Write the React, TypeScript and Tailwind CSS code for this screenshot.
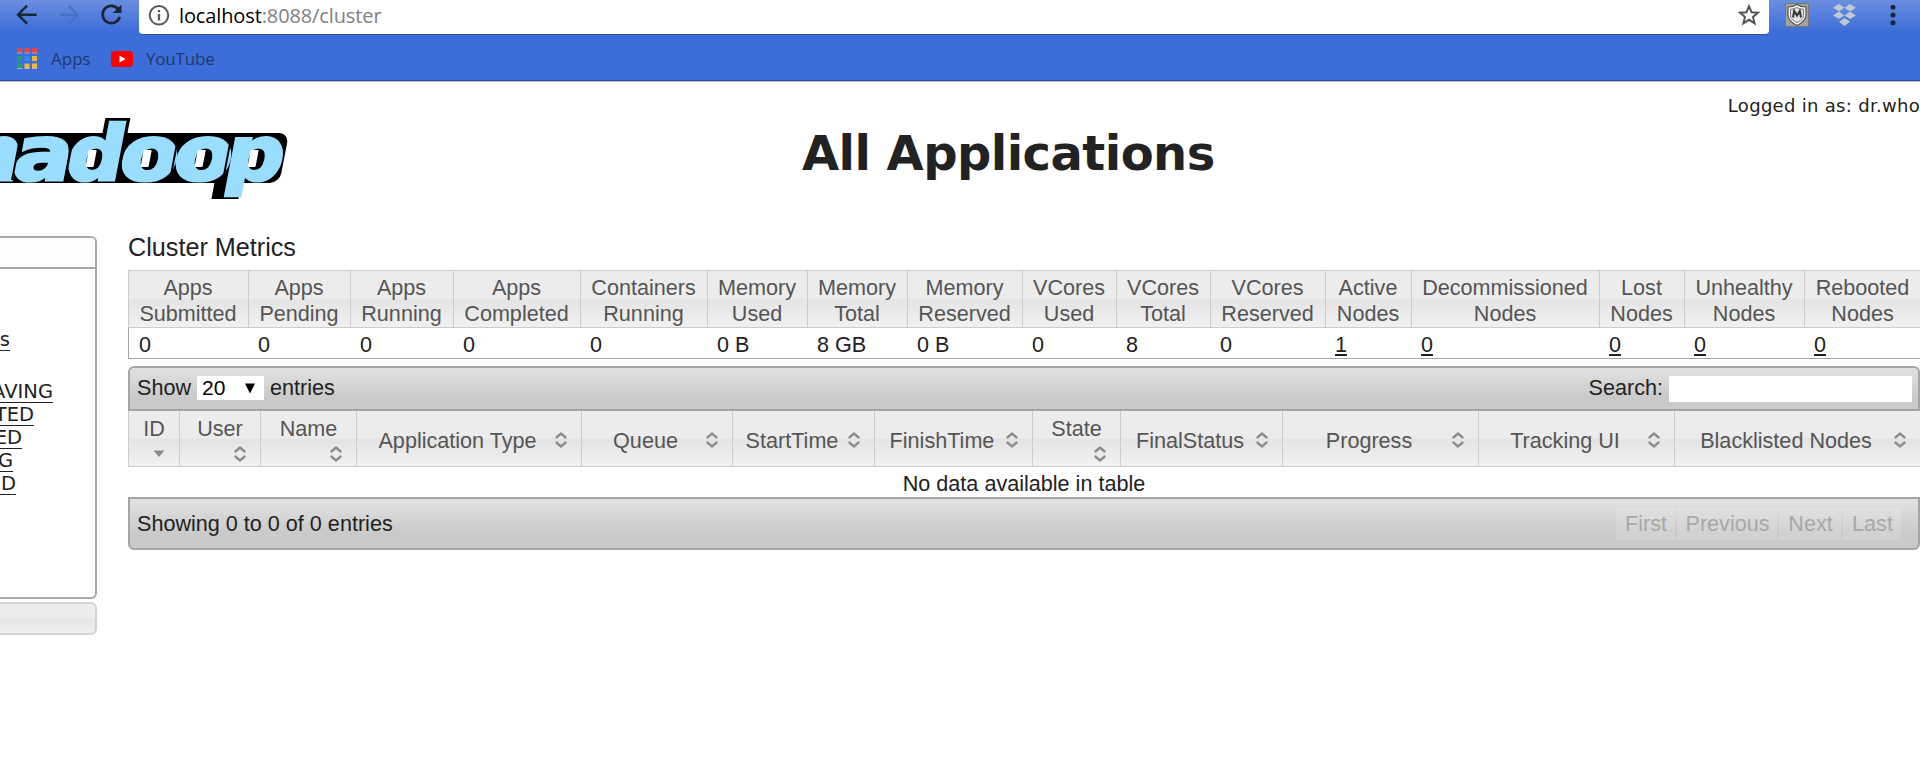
import React from "react";

type Metric = { label: [string, string]; value: string; width: string; link?: boolean };

const metrics: Metric[] = [
  { label: ["Apps", "Submitted"], value: "0", width: "w-[120px]" },
  { label: ["Apps", "Pending"], value: "0", width: "w-[102px]" },
  { label: ["Apps", "Running"], value: "0", width: "w-[103px]" },
  { label: ["Apps", "Completed"], value: "0", width: "w-[127px]" },
  { label: ["Containers", "Running"], value: "0", width: "w-[127px]" },
  { label: ["Memory", "Used"], value: "0 B", width: "w-[100px]" },
  { label: ["Memory", "Total"], value: "8 GB", width: "w-[100px]" },
  { label: ["Memory", "Reserved"], value: "0 B", width: "w-[115px]" },
  { label: ["VCores", "Used"], value: "0", width: "w-[94px]" },
  { label: ["VCores", "Total"], value: "8", width: "w-[94px]" },
  { label: ["VCores", "Reserved"], value: "0", width: "w-[115px]" },
  { label: ["Active", "Nodes"], value: "1", width: "w-[86px]", link: true },
  { label: ["Decommissioned", "Nodes"], value: "0", width: "w-[188px]", link: true },
  { label: ["Lost", "Nodes"], value: "0", width: "w-[85px]", link: true },
  { label: ["Unhealthy", "Nodes"], value: "0", width: "w-[120px]", link: true },
  { label: ["Rebooted", "Nodes"], value: "0", width: "w-[117px]", link: true },
];

type Column = { label: string; width: string; stacked?: boolean; sorted?: boolean };

const columns: Column[] = [
  { label: "ID", width: "w-[51px]", stacked: true, sorted: true },
  { label: "User", width: "w-[81px]", stacked: true },
  { label: "Name", width: "w-[96px]", stacked: true },
  { label: "Application Type", width: "w-[225px]" },
  { label: "Queue", width: "w-[151px]" },
  { label: "StartTime", width: "w-[142px]" },
  { label: "FinishTime", width: "w-[158px]" },
  { label: "State", width: "w-[88px]", stacked: true },
  { label: "FinalStatus", width: "w-[162px]" },
  { label: "Progress", width: "w-[196px]" },
  { label: "Tracking UI", width: "w-[196px]" },
  { label: "Blacklisted Nodes", width: "w-[246px]" },
];

const headerFill =
  "bg-[linear-gradient(to_bottom,#ededed_0%,#ececec_48%,#e4e4e4_52%,#f1f1f1_100%)]";
const barFill = "bg-[linear-gradient(to_bottom,#e2e2e2_0%,#cacaca_70%,#cacaca_100%)]";

function SortIcon({ sorted }: { sorted?: boolean }) {
  return sorted ? (
    <svg className="h-4 w-3 shrink-0" viewBox="0 0 12 16">
      <path d="M.5 4.5h11L6 11z" fill="#8a8a8a" />
    </svg>
  ) : (
    <svg className="h-4 w-3 shrink-0" viewBox="0 0 12 16" fill="none" stroke="#8c8c8c" strokeWidth="2.4">
      <path d="M.8 6 6 1.600l5.200 4.400M.8 10l5.200 4.400 5.200-4.400" />
    </svg>
  );
}

function BrowserBar() {
  return (
    <header className="h-[82px] shrink-0 border-b border-[#b9c4dc]">
      <div className="flex h-[81px] flex-col border-b border-[#2d4a8c] bg-[linear-gradient(to_bottom,#6a8fe0_0px,#3d6dd8_32px)]">
        <div className="flex h-[36px]">
          <div className="flex w-[139px] shrink-0">
            <svg className="h-[36px] w-[139px]" viewBox="0 0 139 36" fill="none" strokeWidth="2.4">
              <path d="M36.5 14.7H18.5M27 5.700l-9 9 9 9" stroke="#1b2636" />
              <path d="M60 14.700h17M69 6l8.500 8.700L69 23.500" stroke="#4a70c4" />
              <path d="M118.500 9.500a8.700 8.700 0 1 0 1.200 7.500" stroke="#1b2636" strokeWidth="2.7" />
              <path d="M121.500 4.500v8.500h-8.700z" fill="#1b2636" />
            </svg>
          </div>
          <div className="flex h-[35px] w-[1630px] shrink-0 rounded-b-[4px] border-b border-[#2f4f99] bg-white">
            <svg className="mt-[4px] ml-[9px] size-[22px] shrink-0" viewBox="0 0 22 22" fill="none" stroke="#5a5a5a">
              <circle cx="11" cy="11.300" r="9.300" strokeWidth="2" />
              <path d="M11 10v6.500M11 6v2.300" strokeWidth="2.300" />
            </svg>
            <div className="ml-[9px] h-[30px] tracking-[-0.12px] whitespace-nowrap font-['Open_Sans',sans-serif] text-[20px] leading-[31px] text-[#808080]">
              <span className="text-black">localhost</span>:8088/cluster
            </div>
            <svg className="mt-[4px] mr-[9px] ml-auto size-[22px]" viewBox="0 0 22 22">
              <path
                d="M11 2.200l2.500 6 6.500.5-5 4.200 1.600 6.400-5.600-3.500-5.600 3.500L7 12.900 2 8.700l6.500-.5z"
                fill="none"
                stroke="#555"
                strokeWidth="2"
              />
            </svg>
          </div>
          <svg className="ml-[15px] h-[28px] w-[26px] shrink-0" viewBox="0 0 26 28">
            <rect x="1.500" y="3.500" width="23" height="23" fill="#a2a2a2" stroke="#777" />
            <path d="M13 4.500C16 6.500 19 7 22 7v8c0 5-4 8-9 10.500C8 23 4 20 4 15V7c3 0 6-.5 9-2.500z" fill="#f4f4f4" stroke="#555" strokeWidth="1.200" />
            <path d="M13 7.500c2.500 1.300 4.500 1.700 6.500 1.800v6.200c0 3-3 5.500-6.500 7-3.500-1.500-6.500-4-6.500-7V9.300c2-.1 4-.5 6.500-1.800z" fill="#e2e2e2" stroke="#777" />
            <path d="M9 17.500 10.200 11l2.800 4.500 2.800-4.500 1.200 6.500" fill="none" stroke="#333" strokeWidth="2" />
          </svg>
          <svg className="ml-[22px] h-[28px] w-[25px] shrink-0" viewBox="0 0 25 28" fill="#c0c8d2">
            <path d="M7 4l5.500 3.800L7 11.500 1 7.800zM18 4l6 3.800-6 3.700-5.500-3.700zM7 11.500l5.500 3.900L7 19l-6-3.600zM18 11.500l6 3.900L18 19l-5.500-3.600zM12.500 18 18 21.700l-5.500 4.300L7 21.700z" />
          </svg>
          <svg className="ml-[30px] h-[28px] w-[12px] shrink-0" viewBox="0 0 12 28" fill="#1b2636">
            <circle cx="6" cy="7.300" r="2.500" />
            <circle cx="6" cy="15" r="2.500" />
            <circle cx="6" cy="22.700" r="2.500" />
          </svg>
        </div>
        <div className="flex h-[44px] font-['Open_Sans',sans-serif] text-[17px] leading-[45px] text-[#1f3a70]">
          <svg className="mt-[12px] ml-[17px] size-[21px]" viewBox="0 0 21 21">
            <path d="M0 0h5v5H0zM7.500 0h5v5h-5zM15 0h5v5h-5z" fill="#e8453c" />
            <path d="M0 8h5v5H0zM0 15.500h5v5H0z" fill="#1fa463" />
            <path d="M7.500 8h5v5h-5z" fill="#2b8cf5" />
            <path d="M15 8h5v5h-5zM7.500 15.500h5v5h-5zM15 15.500h5v5h-5z" fill="#f2b632" />
            <path d="M0 5h5M7.500 5h5M15 5h5M0 20.500h5M7.500 20.500h5M15 20.500h5" stroke="#b7c6e6" strokeWidth=".7" />
          </svg>
          <span className="ml-[13px] w-[60px]">Apps</span>
          <svg className="mt-[14px] h-[18px] w-[22px]" viewBox="0 0 22 18">
            <rect y="1" width="22" height="16" rx="3.500" fill="#f00" />
            <path d="M8.500 5.500v7l6-3.500z" fill="#fff" />
          </svg>
          <span className="ml-[13px] tracking-[-0.2px]">YouTube</span>
        </div>
      </div>
    </header>
  );
}

function Logo() {
  const letters: [string, string][] = [
    ["h", "translate(-42 79.500) scale(1.1 1)"],
    ["a", "translate(10 79.500) scale(1.14 1)"],
    ["d", "translate(62.500 79.500) scale(1.06 1)"],
    ["o", "translate(116 79.500) scale(1.12 1)"],
    ["o", "translate(170 79.500) scale(1.12 1)"],
    ["p", "translate(221.500 79.500) scale(1.08 1)"],
  ];
  return (
    <svg
      className="h-[110px] w-[320px] font-['DejaVu_Sans',sans-serif] text-[76px] font-bold"
      viewBox="0 0 320 110"
    >
      <g transform="translate(15.300 0) skewX(-10.800)">
        <rect x="-40" y="33" width="320" height="50" rx="10" />
        <rect x="93.500" y="18" width="25" height="30" />
        <rect x="215" y="70" width="27" height="29" />
        <g fill="#99ddff" stroke="#99ddff" strokeWidth="3">
          {letters.map(([c, transform], i) => (
            <text key={i} transform={transform}>
              {c}
            </text>
          ))}
        </g>
        <g fill="none" stroke="#000" strokeWidth="2">
          <path d="M12 36v44M65 36v44M117.500 36v44M170 36v44M223 36v44" />
        </g>
        <g fill="#fff">
          <rect x="83" y="50" width="8" height="17" rx="1" />
          <rect x="138" y="50" width="8" height="17" rx="1" />
          <rect x="192" y="50" width="8" height="17" rx="1" />
          <rect x="245" y="50" width="8" height="17" rx="1" />
        </g>
      </g>
    </svg>
  );
}

function MenuLink({ text, width }: { text: string; width: string }) {
  return (
    <div className="flex h-[23px]">
      <a className={`flex h-[21px] ${width} justify-end border-b border-[#222] whitespace-nowrap`}>{text}</a>
    </div>
  );
}

function SideNav() {
  return (
    <nav className="w-[128px] shrink-0 font-['DejaVu_Sans',sans-serif] text-[19.500px] leading-[20px]">
      <div className="mt-[26px] h-[363px] w-[97px] overflow-hidden rounded-r-[6px] border-2 border-l-0 border-[#a8a8a8]">
        <div className="h-[31px] border-b-2 border-[#a8a8a8] bg-[#fdfdfd]" />
        <div className="pt-[61px]">
          <MenuLink text="s" width="w-[10px]" />
        </div>
        <div className="pt-[29px]">
          <MenuLink text="AVING" width="w-[53px]" />
          <MenuLink text="TED" width="w-[34px]" />
          <MenuLink text="ED" width="w-[22px]" />
          <MenuLink text="G" width="w-[13px]" />
          <MenuLink text="D" width="w-[16px]" />
        </div>
      </div>
      <div className={`mt-[3px] h-[33px] w-[97px] rounded-r-[6px] border-2 border-l-0 border-[#d3d3d3] ${headerFill}`} />
    </nav>
  );
}

function MetricsTable() {
  return (
    <div className="flex w-[1793px] border-t border-b border-t-[#ccc] border-b-[#a5a5a5]">
      {metrics.map((m, i) => (
        <div key={i} className={`${m.width} shrink-0`}>
          <div
            className={`flex h-[57px] flex-col items-center border-b border-l border-[#ccc] pt-[4px] pr-px leading-[26px] text-[#555] ${headerFill}`}
          >
            <span>{m.label[0]}</span>
            <span>{m.label[1]}</span>
          </div>
          <div
            className={`flex h-[30px] pl-[10px] leading-[33px] ${i === 0 ? "border-l border-[#a5a5a5]" : ""}`}
          >
            {m.link ? (
              <a className="h-[28px] border-b-2 border-[#222]">{m.value}</a>
            ) : (
              <span>{m.value}</span>
            )}
          </div>
        </div>
      ))}
    </div>
  );
}

function ApplicationsTable() {
  return (
    <section className="mt-[7px] w-[1792px]">
      <div className={`flex h-[45px] rounded-t-[6px] border-2 border-[#a5a5a5] pl-[7px] leading-[39px] ${barFill}`}>
        <span className="w-[60px]">Show</span>
        <div className="mt-[8px] flex h-[24px] w-[67px] bg-white pl-[5px] text-[21px] leading-[24px] text-black">
          20
          <svg className="mt-[7px] ml-[20px] h-[11px] w-[10px]" viewBox="0 0 10 11">
            <path d="M0 .5h10L5 10.500z" />
          </svg>
        </div>
        <span className="ml-[6px]">entries</span>
        <span className="ml-auto">Search:</span>
        <input className="mt-[8px] mr-[6px] ml-[6px] h-[26px] w-[243px] bg-white" aria-label="Search" />
      </div>
      <div className="flex w-[1793px] text-[#555]">
        {columns.map((c) => (
          <div
            key={c.label}
            className={`flex h-[56px] shrink-0 border-b border-l border-[#ccc] ${c.width} ${headerFill} ${
              c.stacked ? "flex-col pt-[5px]" : "items-center pr-[14px]"
            }`}
          >
            <span className={c.stacked ? "text-center leading-[26px]" : "grow pt-[5px] pl-[3px] text-center leading-[30px]"}>
              {c.label}
            </span>
            <span className={c.stacked ? "mt-[4px] mr-[14px] flex justify-end" : "flex pt-[2px]"}>
              <SortIcon sorted={c.sorted} />
            </span>
          </div>
        ))}
      </div>
      <div className="h-[30px] w-[1792px] text-center leading-[33px]">No data available in table</div>
      <div className={`flex h-[53px] rounded-b-[6px] border-2 border-[#a5a5a5] pl-[7px] leading-[50px] ${barFill}`}>
        <span>Showing 0 to 0 of 0 entries</span>
        <div className="mt-[9px] mr-[17px] ml-auto flex h-[32px] gap-[2px] leading-[32px] text-[#a8a8a8]">
          <span className="w-[59px] rounded-l-[4px] bg-white/15 pl-px text-center">First</span>
          <span className="w-[100px] bg-white/15 pl-px text-center">Previous</span>
          <span className="w-[62px] bg-white/15 pl-px text-center">Next</span>
          <span className="w-[58px] rounded-r-[4px] bg-white/15 pl-px text-center">Last</span>
        </div>
      </div>
    </section>
  );
}

export default function App() {
  return (
    <div className="flex h-[761px] w-[1920px] flex-col overflow-hidden bg-white text-[#222]">
      <BrowserBar />
      <div className="flex h-[128px] shrink-0 font-['DejaVu_Sans',sans-serif]">
        <div className="w-[320px] shrink-0 pt-[18px]">
          <Logo />
        </div>
        <h1 className="ml-[482px] pt-[42px] text-[48px] leading-[58px] font-bold tracking-[-0.55px] whitespace-nowrap">
          All Applications
        </h1>
        <div className="ml-auto pt-[12px] text-[18px] leading-[24px] tracking-[0.3px] whitespace-nowrap">
          Logged in as: dr.who
        </div>
      </div>
      <div className="flex grow">
        <SideNav />
        <main className="w-[1792px] shrink-0 font-['Liberation_Sans',Arial,sans-serif] text-[21.600px] whitespace-nowrap">
          <h2 className="h-[60px] pt-[22px] text-[25.200px] leading-[30px]">Cluster Metrics</h2>
          <MetricsTable />
          <ApplicationsTable />
        </main>
      </div>
    </div>
  );
}
